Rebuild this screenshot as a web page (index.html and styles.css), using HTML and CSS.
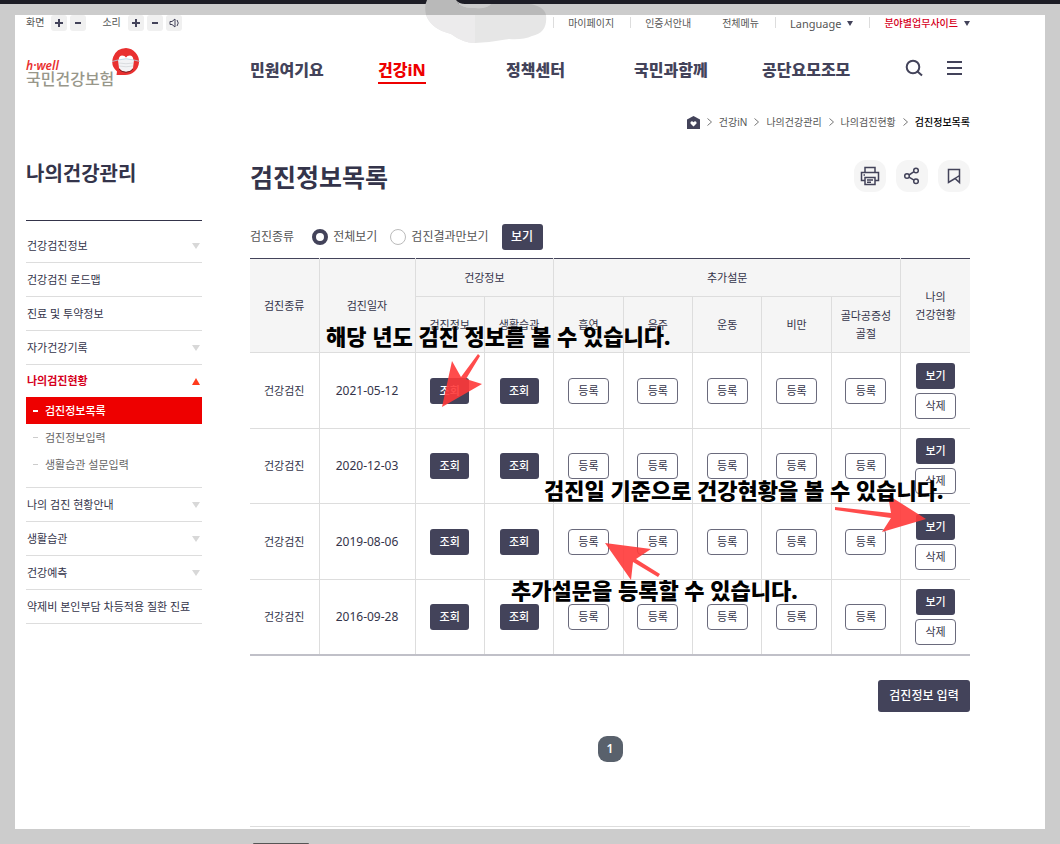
FILE: index.html
```html
<!DOCTYPE html>
<html lang="ko">
<head>
<meta charset="utf-8">
<meta name="viewport" content="width=device-width, initial-scale=1">
<title>검진정보목록 - 국민건강보험</title>
<link rel="stylesheet" href="styles.css">
</head>
<body>
<div class="page">
<div class="sheet">
  <div class="util">
    <div class="util-tools">
      <span class="util-label">화면</span>
      <button class="tool" aria-label="화면 확대"><svg viewBox="0 0 16 16"><path d="M8 4v8M4 8h8"/></svg></button>
      <button class="tool" aria-label="화면 축소"><svg viewBox="0 0 16 16"><path d="M5 8h6"/></svg></button>
      <span class="util-label util-sound">소리</span>
      <button class="tool" aria-label="소리 크게"><svg viewBox="0 0 16 16"><path d="M8 4v8M4 8h8"/></svg></button>
      <button class="tool" aria-label="소리 작게"><svg viewBox="0 0 16 16"><path d="M5 8h6"/></svg></button>
      <button class="tool thin" aria-label="음소거"><svg viewBox="0 0 16 16"><path d="M4 6.500h2L9 4v8L6 9.500H4zM11 5q2.500 3 0 6"/></svg></button>
    </div>
    <ul class="util-links">
      <li><a href="#">마이페이지</a></li>
      <li><a href="#">인증서안내</a></li>
      <li class="no-line"><a href="#">전체메뉴</a></li>
      <li><a href="#" class="lang">Language</a><i class="tri"></i></li>
      <li><a href="#" class="biz">분야별업무사이트</a><i class="tri"></i></li>
    </ul>
  </div>

  <header class="header">
    <a class="logo" href="#">
      <span class="logo-text"><em>h·well</em><span>국민건강보험</span></span>
      <svg class="logo-mark" viewBox="0 0 28 28" aria-hidden="true">
        <path d="M14 0a14 13.500 0 1 1-2 27H4.500l.5-3.500A14 13.500 0 0 1 14 0z" fill="#e93030"/>
        <path d="M7 13Q6 8 10 7.500q3 0 4 2 1-2 4-2 4 .5 3 5.500z" fill="#fff"/>
        <path d="M6 12q8-2.500 16 0l-1 8q-2 3.500-7 4-5-.5-7-4z" fill="#f2f3f5"/>
        <path d="M0 13.500l6-1.500M28 13.500L22 12M6 12q8-2.500 16 0" fill="none" stroke="#b5d3e4" stroke-width=".8"/>
        <path d="M7 15q7 1.500 14 0M7 18q7 1.500 14 0" fill="none" stroke="#cfd2d6" stroke-width=".7"/>
        <path d="M7 21q2 3 7 3.300 5-.3 7-3.300" fill="none" stroke="#7c2224"/>
      </svg>
    </a>
    <nav class="gnb" aria-label="주메뉴">
      <a href="#">민원여기요</a>
      <a href="#" class="on">건강iN</a>
      <a href="#">정책센터</a>
      <a href="#">국민과함께</a>
      <a href="#">공단요모조모</a>
    </nav>
    <div class="header-tools">
      <button aria-label="검색"><svg viewBox="0 0 18 18"><circle cx="8" cy="8" r="6.300"/><path d="M12.500 12.500L17 16.500"/></svg></button>
      <button aria-label="전체메뉴 열기"><svg viewBox="0 0 18 18"><path d="M1 3h15M1 9h15M1 15h15"/></svg></button>
    </div>
  </header>

  <nav class="crumbs" aria-label="현재 위치">
    <a href="#" aria-label="홈"><svg class="home" viewBox="0 0 13 13"><path d="M6.500 0L13 3.500V13H0V3.500z" fill="#43435a"/><path d="M6.500 10.500L3.500 7.500q-.5-2 1.200-2.300 1.200 0 1.800 1 .6-1 1.800-1Q10 5.500 9.500 7.500z" fill="#fff"/></svg></a>
    <svg class="chev" viewBox="0 0 5 8"><path d="M.5.5L4.500 4 .5 7.500"/></svg>
    <a href="#">건강iN</a>
    <svg class="chev" viewBox="0 0 5 8"><path d="M.5.5L4.500 4 .5 7.500"/></svg>
    <a href="#">나의건강관리</a>
    <svg class="chev" viewBox="0 0 5 8"><path d="M.5.5L4.500 4 .5 7.500"/></svg>
    <a href="#">나의검진현황</a>
    <svg class="chev" viewBox="0 0 5 8"><path d="M.5.5L4.500 4 .5 7.500"/></svg>
    <strong>검진정보목록</strong>
  </nav>

  <div class="body">
    <aside class="side">
      <h2>나의건강관리</h2>
      <ul class="lnb">
        <li><a href="#">건강검진정보<i class="arrow"></i></a></li>
        <li><a href="#">건강검진 로드맵</a></li>
        <li><a href="#">진료 및 투약정보</a></li>
        <li><a href="#">자가건강기록<i class="arrow"></i></a></li>
        <li class="open"><a href="#">나의검진현황<i class="arrow up"></i></a>
          <ul class="sub">
            <li class="on"><a href="#">검진정보목록</a></li>
            <li><a href="#">검진정보입력</a></li>
            <li><a href="#">생활습관 설문입력</a></li>
          </ul>
        </li>
        <li><a href="#">나의 검진 현황안내<i class="arrow"></i></a></li>
        <li><a href="#">생활습관<i class="arrow"></i></a></li>
        <li><a href="#">건강예측<i class="arrow"></i></a></li>
        <li><a href="#">약제비 본인부담 차등적용 질환 진료</a></li>
      </ul>
    </aside>

    <main class="main">
      <div class="title-row">
        <h1>검진정보목록</h1>
        <div class="actions">
          <button aria-label="인쇄"><svg viewBox="0 0 20 20"><path d="M5 6V1.500h10V6M5 14.500H1.500V6.500h17v8H15M5 11.500h10v7H5zM7 14h6M7 16.300h4M3.500 9h1.500"/></svg></button>
          <button aria-label="공유"><svg viewBox="0 0 20 20"><circle cx="5" cy="10" r="2.300"/><circle cx="14" cy="4.500" r="2.300"/><circle cx="14" cy="15.300" r="2.300"/><path d="M7 9l5-3.300M7 11.200l5 3"/></svg></button>
          <button aria-label="즐겨찾기"><svg viewBox="0 0 20 20"><path d="M4.500 3.500h11v13L11 12.500l-6.500 4zM11 12.500l4.500-3"/></svg></button>
        </div>
      </div>

      <form class="filter">
        <span class="filter-name">검진종류</span>
        <input type="radio" name="kind" id="all" checked><label for="all">전체보기</label>
        <input type="radio" name="kind" id="result"><label for="result">검진결과만보기</label>
        <button type="button" class="btn dark wide">보기</button>
      </form>

      <div class="table-wrap">
        <table class="list">
          <colgroup><col class="c-kind"><col class="c-date"><col><col><col><col><col><col><col><col></colgroup>
          <thead>
            <tr><th rowspan="2">검진종류</th><th rowspan="2">검진일자</th><th colspan="2">건강정보</th><th colspan="5">추가설문</th><th rowspan="2">나의<br>건강현황</th></tr>
            <tr><th>검진정보</th><th>생활습관</th><th>흡연</th><th>음주</th><th>운동</th><th>비만</th><th>골다공증성<br>골절</th></tr>
          </thead>
          <tbody>
            <tr><td>건강검진</td><td class="date">2021-05-12</td><td><button class="btn dark">조회</button></td><td><button class="btn dark">조회</button></td><td><button class="btn line">등록</button></td><td><button class="btn line">등록</button></td><td><button class="btn line">등록</button></td><td><button class="btn line">등록</button></td><td><button class="btn line">등록</button></td><td><div class="pair"><button class="btn dark">보기</button><button class="btn line">삭제</button></div></td></tr>
            <tr><td>건강검진</td><td class="date">2020-12-03</td><td><button class="btn dark">조회</button></td><td><button class="btn dark">조회</button></td><td><button class="btn line">등록</button></td><td><button class="btn line">등록</button></td><td><button class="btn line">등록</button></td><td><button class="btn line">등록</button></td><td><button class="btn line">등록</button></td><td><div class="pair"><button class="btn dark">보기</button><button class="btn line">삭제</button></div></td></tr>
            <tr><td>건강검진</td><td class="date">2019-08-06</td><td><button class="btn dark">조회</button></td><td><button class="btn dark">조회</button></td><td><button class="btn line">등록</button></td><td><button class="btn line">등록</button></td><td><button class="btn line">등록</button></td><td><button class="btn line">등록</button></td><td><button class="btn line">등록</button></td><td><div class="pair"><button class="btn dark">보기</button><button class="btn line">삭제</button></div></td></tr>
            <tr><td>건강검진</td><td class="date">2016-09-28</td><td><button class="btn dark">조회</button></td><td><button class="btn dark">조회</button></td><td><button class="btn line">등록</button></td><td><button class="btn line">등록</button></td><td><button class="btn line">등록</button></td><td><button class="btn line">등록</button></td><td><button class="btn line">등록</button></td><td><div class="pair"><button class="btn dark">보기</button><button class="btn line">삭제</button></div></td></tr>
          </tbody>
        </table>

        <svg class="pointers" viewBox="0 0 720 400" width="720" height="400" aria-hidden="true">
          <path d="M228 96L230 98 216 121 232 126 192 149 202 103 211 119z"/>
          <path d="M585 249L641 255 638 237 676 261 632 274 641 260 585 252z"/>
          <path d="M355 285L401 291 386 301 410 316 408 319 383 304 381 322z"/>
        </svg>
        <p class="note note-info">해당 년도 검진 정보를 볼 수 있습니다.</p>
        <p class="note note-status">검진일 기준으로 건강현황을 볼 수 있습니다.</p>
        <p class="note note-survey">추가설문을 등록할 수 있습니다.</p>
      </div>

      <div class="submit-row"><button class="btn dark enter">검진정보 입력</button></div>
      <div class="paging"><a href="#" aria-current="page">1</a></div>
      <hr>
    </main>
  </div>
</div>
<div class="bottom-tab"></div>
<svg class="smudge" viewBox="0 0 122 44" aria-hidden="true">
  <path d="M1 15H121Q123 33 107 36 98 40 84 39 68 42 50 43 38 43 26 34 6 29 1 15z" fill="#e6e6e6"/>
  <path d="M1 15H50V43Q38 43 26 34 6 29 1 15z" fill="#ecebec"/>
  <path d="M2 0H31Q36 9 50 8 62 9 66 4H104Q119 6 121 15H1Q-1 6 2 0z" fill="#b9b9b9"/>
  <path d="M31 0Q34 4 40 4H66Q62 9 50 8 36 9 31 0z" fill="#ccc"/>
</svg>
</div>
</body>
</html>
```

FILE: styles.css
```css
* { box-sizing: border-box; }

body {
  margin: 0;
  background: #ccc;
  color: #34344a;
  font: 11px/18px "Noto Sans", "Noto Sans CJK KR", sans-serif;
}

a { color: inherit; text-decoration: none; }
ul { margin: 0; padding: 0; list-style: none; }
h1, h2, p { margin: 0; }
button { padding: 0; border: 0; background: none; font: inherit; color: inherit; cursor: pointer; }

.page {
  position: relative;
  min-height: 100vh;
  padding: 11px 15px 0;
  border-top: 4px solid #1d1d26;
  display: flex;
  flex-direction: column;
}

.sheet { flex: none; padding: 0 75px 2px 11px; background: #fff; }

/* utility bar */
.util { display: flex; justify-content: space-between; height: 16px; font-size: 10px; line-height: 15px; color: #555; }
.util-tools { display: flex; gap: 3px; }
.util-label { margin-right: 4px; }
.util-sound { margin-left: 13px; }
.tool { width: 16px; height: 16px; border-radius: 3px; background: #f0f0f0; }
.tool svg { display: block; fill: none; stroke: #43435a; stroke-width: 2; }
.tool.thin svg { stroke-width: 1; }
.util-links { display: flex; }
.util-links li { position: relative; display: flex; align-items: center; gap: 6px; padding: 0 16px 0 15px; }
.util-links li:last-child { padding-right: 0; }
.util-links li::before { content: ""; position: absolute; left: 0; top: 2px; height: 11px; border-left: 1px solid #ddd; }
.util-links .no-line::before { display: none; }
.lang { font-size: 11px; }
.biz { color: #d6001c; font-weight: 500; }
.tri { border: 3px solid transparent; border-top: 5px solid #43435a; border-bottom: 0; }

/* header */
.header { display: flex; align-items: center; height: 78px; }
.logo { display: flex; width: 224px; height: 44px; }
.logo-text { display: flex; flex-direction: column; padding-top: 12px; }
.logo-text em { color: #e93030; font-size: 12px; font-weight: 600; line-height: 12px; }
.logo-text span { color: #98978a; font-size: 16px; font-weight: 500; line-height: 15px; }
.logo-mark { width: 28px; height: 28px; margin-left: -2px; }
.gnb { display: grid; grid-template-columns: repeat(5, 128px); flex: 1; justify-items: start; font-size: 16px; font-weight: 800; line-height: 24px; color: #43435a; white-space: nowrap; }
.gnb a { padding: 2px 0 0; border-bottom: 2px solid transparent; }
.gnb .on { color: #e00; border-color: #e00; }
.header-tools { display: flex; gap: 23px; margin-right: 6px; }
.header-tools svg { display: block; width: 18px; height: 18px; margin-bottom: 4px; fill: none; stroke: #43435a; stroke-width: 2; }

/* breadcrumb */
.crumbs { display: flex; justify-content: flex-end; align-items: center; gap: 7px; height: 26px; font-size: 10px; color: #555; }
.crumbs strong { color: #000; font-weight: 500; }
.home { display: block; width: 13px; height: 13px; }
.chev { width: 5px; height: 8px; fill: none; stroke: #777; }

/* body columns */
.body { display: flex; gap: 48px; }
.side { flex: 0 0 176px; }
.side h2 { padding-top: 25px; height: 85px; font-size: 20px; line-height: 28px; }

.lnb { padding-top: 8px; border-top: 1px solid #34344a; }
.lnb > li { border-bottom: 1px solid #ddd; }
.lnb > li > a { display: flex; align-items: center; justify-content: space-between; height: 33px; padding: 0 2px 0 1px; white-space: nowrap; }
.lnb .open > a { height: 32px; color: #d6001c; font-weight: 700; }
.arrow { border: 4px solid transparent; border-top: 6px solid #d8d8d8; border-bottom: 0; }
.arrow.up { border: 4px solid transparent; border-bottom: 7px solid #ff3a1c; border-top: 0; }
.sub { padding-bottom: 9px; color: #666; }
.sub a { display: flex; align-items: center; gap: 7px; height: 27px; padding-left: 7px; }
.sub a::before { content: ""; width: 5px; height: 1px; background: #ccc; }
.sub .on a { background: #e00; color: #fff; font-weight: 500; }
.sub .on a::before { height: 2px; background: #fff; }

.main { flex: 1; min-width: 0; }
.title-row { display: flex; justify-content: space-between; padding-top: 25px; height: 82px; }
.title-row h1 { font-size: 25px; line-height: 34px; }
.actions { display: flex; gap: 10px; }
.actions button { display: grid; place-items: center; width: 32px; height: 32px; border-radius: 12px; background: #f5f5f5; }
.actions svg { width: 20px; height: 20px; fill: none; stroke: #43435a; stroke-width: 1.5; }

/* filter */
.filter { display: flex; align-items: center; height: 41px; padding-bottom: 1px; font-size: 12px; color: #555; }
.filter-name { margin-right: 18px; }
.filter input { appearance: none; width: 16px; height: 16px; margin: 0 5px 0 0; border: 1px solid #bbb; border-radius: 50%; background: #fff; }
.filter input:checked { border: 4px solid #43435a; }
.filter label { margin-right: 13px; }

.btn { width: 39px; height: 26px; border-radius: 3px; font-size: 11px; line-height: 18px; white-space: nowrap; }
.dark { background: #43435a; color: #fff; font-weight: 500; }
.line { width: 41px; border: 1px solid #6a6a7c; border-radius: 4px; background: #fff; }
.wide { width: 41px; font-size: 12px; }

/* table */
.table-wrap { position: relative; }
.list { width: 100%; table-layout: fixed; border-collapse: collapse; border-top: 1px solid #43435a; border-bottom: 2px solid #c0c0c8; text-align: center; }
.c-kind { width: 69px; }
.c-date { width: 96px; }
.list th, .list td { padding: 0; border: 1px solid #ddd; border-left: 0; vertical-align: middle; }
.list th { background: #f5f5f5; font-weight: 400; }
.list th:first-child, .list thead tr:first-child th { border-top-color: #43435a; }
.list tr > :last-child { border-right: 0; }
.list thead tr + tr > :first-child { border-top-color: #ddd; }
.list thead tr + tr > :last-child { border-right: 1px solid #ddd; }
.list thead tr:first-child { height: 38px; }
.list thead tr + tr { height: 56px; }
.list tbody tr { height: 76px; }
.list tbody tr:nth-child(even) { height: 75px; }
.list tbody tr:last-child td { border-bottom: 2px solid #c0c0c8; }
.date { font-size: 12px; }
.list .btn { vertical-align: middle; }
.pair { display: flex; flex-direction: column; align-items: center; gap: 4px; }

/* callouts over the table */
.pointers { position: absolute; left: 0; top: 0; fill: #ff3838; fill-opacity: .9; }
.note { position: absolute; color: #000; font-size: 22px; font-weight: 900; line-height: 30px; white-space: nowrap; }
.note-info { left: 76px; top: 63px; }
.note-status { left: 294px; top: 217px; }
.note-survey { left: 261px; top: 317px; }

.submit-row { display: flex; justify-content: flex-end; padding: 24px 0; }
.enter { width: 92px; height: 32px; font-size: 12px; }
.paging { display: flex; justify-content: center; }
.paging a { width: 25px; height: 26px; border-radius: 9px; background: #59616c; color: #fff; font-size: 12px; font-weight: 600; line-height: 26px; text-align: center; }
hr { margin: 64px 0 0; border: 0; border-top: 1px solid #ddd; }

.bottom-tab { width: 56px; height: 1px; margin: 14px 0 0 238px; border-radius: 4px 4px 0 0; background: #555; }
.smudge { position: absolute; left: 425px; top: -4px; width: 122px; height: 44px; }
```
